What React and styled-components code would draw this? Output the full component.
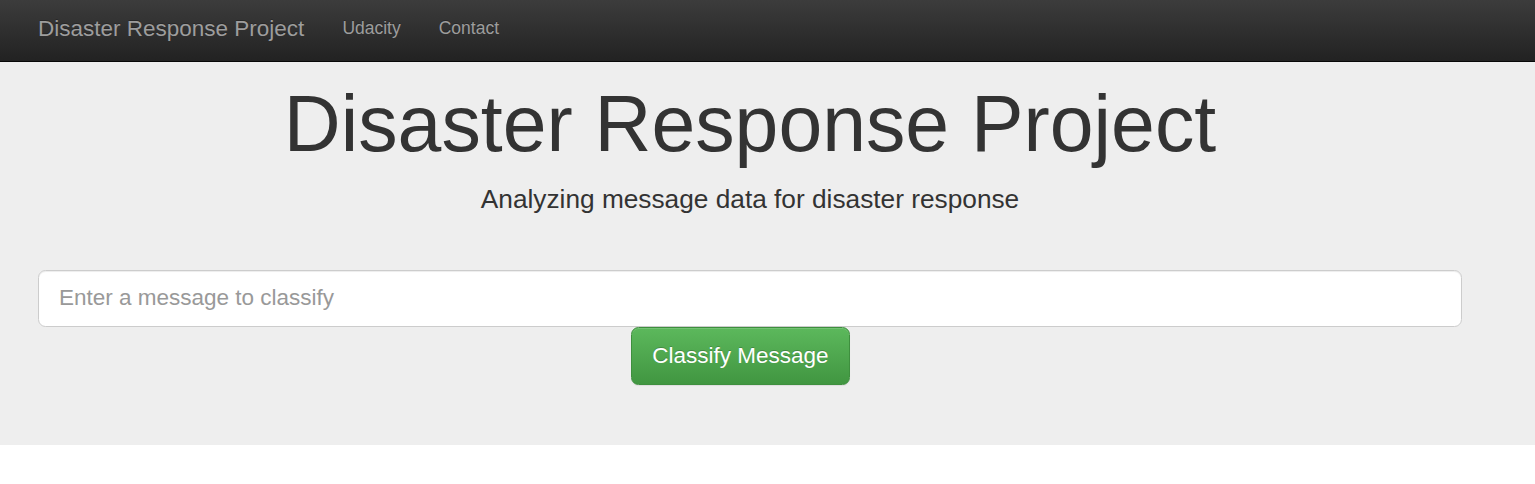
import React from "react";
import styled, { createGlobalStyle } from "styled-components";

const GlobalStyle = createGlobalStyle`
  html, body {
    margin: 0;
    padding: 0;
    background: #fff;
  }
  body {
    font-family: "Liberation Sans", Arial, Helvetica, sans-serif;
    color: #333;
  }
  * {
    box-sizing: border-box;
  }
`;

const Navbar = styled.nav`
  height: 62px;
  background-image: linear-gradient(to bottom, #3c3c3c 0, #222 100%);
  border-bottom: 1px solid #080808;
`;

const NavInner = styled.div`
  height: 61px;
  margin-left: 19px;
  padding-bottom: 4px;
  display: flex;
  align-items: center;
`;

const Brand = styled.a`
  font-size: 22.5px;
  line-height: 25px;
  padding: 0 19px;
  color: #9d9d9d;
  text-decoration: none;
  text-shadow: 0 -1px 0 rgba(0, 0, 0, 0.25);
`;

const NavLink = styled.a`
  font-size: 17.5px;
  line-height: 25px;
  padding: 0 19px;
  color: #9d9d9d;
  text-decoration: none;
  text-shadow: 0 -1px 0 rgba(0, 0, 0, 0.25);
`;

const Jumbotron = styled.section`
  background: #eee;
  padding: 19px 0 60px;
`;

const Container = styled.div`
  width: 1424px;
  margin-left: 38px;
`;

const Title = styled.h1`
  margin: 0 0 13px;
  font-size: 78.75px;
  line-height: 87px;
  font-weight: 400;
  text-align: center;
  color: #333;
`;

const Lead = styled.p`
  margin: 0;
  font-size: 26.25px;
  line-height: 37.5px;
  text-align: center;
`;

const Divider = styled.hr`
  margin: 25px 0 25px;
  border: 0;
  border-top: 1px solid #eee;
`;

const Input = styled.input`
  display: block;
  width: 100%;
  height: 57.5px;
  padding: 12.5px 20px;
  font-family: inherit;
  font-size: 22.5px;
  color: #555;
  background: #fff;
  border: 1px solid #ccc;
  border-radius: 7.5px;
  box-shadow: inset 0 1px 1px rgba(0, 0, 0, 0.075);
  outline: none;
  &::placeholder {
    color: #999;
  }
`;

const Offset = styled.div`
  margin-left: 41.6667%;
`;

const Button = styled.button`
  height: 57.5px;
  padding: 0 20px;
  font-family: inherit;
  font-size: 22.5px;
  color: #fff;
  background-image: linear-gradient(to bottom, #5cb85c 0, #419641 100%);
  border: 1px solid #3e8f3e;
  border-radius: 7.5px;
  text-shadow: 0 -1px 0 rgba(0, 0, 0, 0.2);
  box-shadow: inset 0 1px 0 rgba(255, 255, 255, 0.15),
    0 1px 1px rgba(0, 0, 0, 0.075);
  cursor: pointer;
`;

export default function App() {
  return (
    <>
      <GlobalStyle />
      <Navbar>
        <NavInner>
          <Brand href="#">Disaster Response Project</Brand>
          <NavLink href="#">Udacity</NavLink>
          <NavLink href="#">Contact</NavLink>
        </NavInner>
      </Navbar>
      <Jumbotron>
        <Container>
          <Title>Disaster Response Project</Title>
          <Lead>Analyzing message data for disaster response</Lead>
          <Divider />
          <form onSubmit={(e) => e.preventDefault()}>
            <Input type="text" placeholder="Enter a message to classify" />
            <Offset>
              <Button type="submit">Classify Message</Button>
            </Offset>
          </form>
        </Container>
      </Jumbotron>
    </>
  );
}
